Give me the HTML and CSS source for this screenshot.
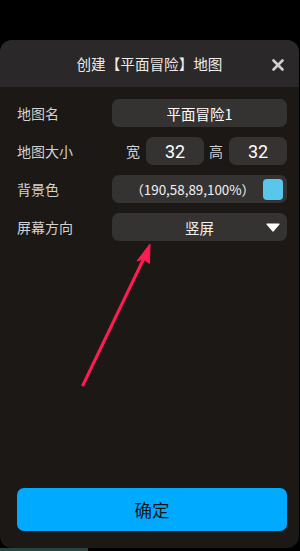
FILE: index.html
```html
<!DOCTYPE html>
<html lang="zh">
<head>
<meta charset="utf-8">
<link rel="stylesheet" href="styles.css">
</head>
<body>
<div class="dialog">
  <div class="header">
    <div class="title">创建【平面冒险】地图</div>
    <svg class="close" width="12" height="12" viewBox="0 0 12 12"><path d="M1.5 1.5 L10.5 10.5 M10.5 1.5 L1.5 10.5" stroke="#cfcfcf" stroke-width="2.6" stroke-linecap="round"/></svg>
  </div>
  <div class="body">
    <div class="row">
      <div class="label">地图名</div>
      <div class="box center">平面冒险1</div>
    </div>
    <div class="row">
      <div class="label">地图大小</div>
      <div class="size">
        <span class="sl">宽</span>
        <div class="box num">32</div>
        <span class="sl sl2">高</span>
        <div class="box num">32</div>
      </div>
    </div>
    <div class="row">
      <div class="label">背景色</div>
      <div class="box color">
        <span class="ctext">（190,58,89,100%）</span>
        <span class="swatch"></span>
      </div>
    </div>
    <div class="row">
      <div class="label">屏幕方向</div>
      <div class="box select">
        <span></span>
        <span class="seltext">竖屏</span>
        <svg class="tri" width="14" height="9" viewBox="0 0 14 9"><path d="M1 1 L13 1 L7 8 Z" fill="#ffffff" stroke="#ffffff" stroke-width="1.2" stroke-linejoin="round"/></svg>
      </div>
    </div>
  </div>
  <div class="spacer"></div>
  <div class="btn">确定</div>
  <svg class="arrow" width="300" height="551" viewBox="0 0 300 551">
    <line x1="83" y1="385" x2="145" y2="256" stroke="#ff1c50" stroke-width="3" stroke-linecap="round"/>
    <path d="M150 244 L137 261 L143.5 259 L149.5 263.5 Z" fill="#ff1c50" stroke="#ff1c50" stroke-width="1" stroke-linejoin="round"/>
  </svg>
</div>
<div class="strip"></div>
</body>
</html>
```

FILE: styles.css
```css
* { box-sizing: border-box; }
html, body {
  margin: 0;
  padding: 0;
  background: #000;
  width: 300px;
  height: 551px;
  overflow: hidden;
  font-family: "Noto Sans CJK SC", "Noto Sans", sans-serif;
}
.dialog {
  margin-top: 40px;
  width: 299px;
  height: 508px;
  background: #1b1816;
  border-radius: 12px;
  display: flex;
  flex-direction: column;
  overflow: hidden;
}
.header {
  height: 47px;
  background: #2a2828;
  display: flex;
  align-items: center;
  justify-content: center;
  position: relative;
  flex: none;
}
.title {
  color: #ececec;
  font-size: 14.6px;
  line-height: 20px;
}
.close {
  position: absolute;
  right: 15px;
  top: 19px;
}
.body {
  padding: 12px 12px 0 17px;
  display: flex;
  flex-direction: column;
  gap: 10px;
}
.row {
  display: flex;
  align-items: center;
  height: 28px;
}
.label {
  width: 95px;
  color: #d2d2d2;
  font-size: 14px;
  line-height: 20px;
}
.box {
  background: #353332;
  border-radius: 7px;
  height: 28px;
  color: #ffffff;
  display: flex;
  align-items: center;
}
.row > .box { width: 175px; }
.center {
  justify-content: center;
  font-size: 14.5px;
}
.size {
  width: 175px;
  display: flex;
  align-items: center;
  justify-content: flex-end;
}
.sl {
  color: #d2d2d2;
  font-size: 14px;
  margin-right: 6px;
}
.sl2 { margin-left: 5px; }
.num {
  width: 58px;
  justify-content: center;
  font-family: "Roboto", "Noto Sans", sans-serif;
  font-size: 18px;
}
.color {
  justify-content: flex-end;
  padding-right: 4px;
}
.ctext {
  font-size: 13.4px;
  color: #f0f0f0;
  margin-right: 8px;
}
.swatch {
  width: 20px;
  height: 21px;
  border-radius: 4px;
  background: #5bc6ec;
}
.select {
  display: grid;
  grid-template-columns: 1fr auto 1fr;
  align-items: center;
}
.seltext {
  font-size: 14.5px;
  color: #f0f0f0;
}
.tri {
  justify-self: end;
  margin-right: 7px;
}
.spacer { flex: 1; }
.btn {
  flex: none;
  margin: 0 12px 17px 17px;
  height: 43px;
  border-radius: 7px;
  background: #00aaff;
  color: #151515;
  font-size: 17.5px;
  display: flex;
  align-items: center;
  justify-content: center;
}
.arrow {
  position: absolute;
  left: 0;
  top: 0;
  pointer-events: none;
}
.strip {
  width: 88px;
  height: 3px;
  background: #2c4440;
}
```
